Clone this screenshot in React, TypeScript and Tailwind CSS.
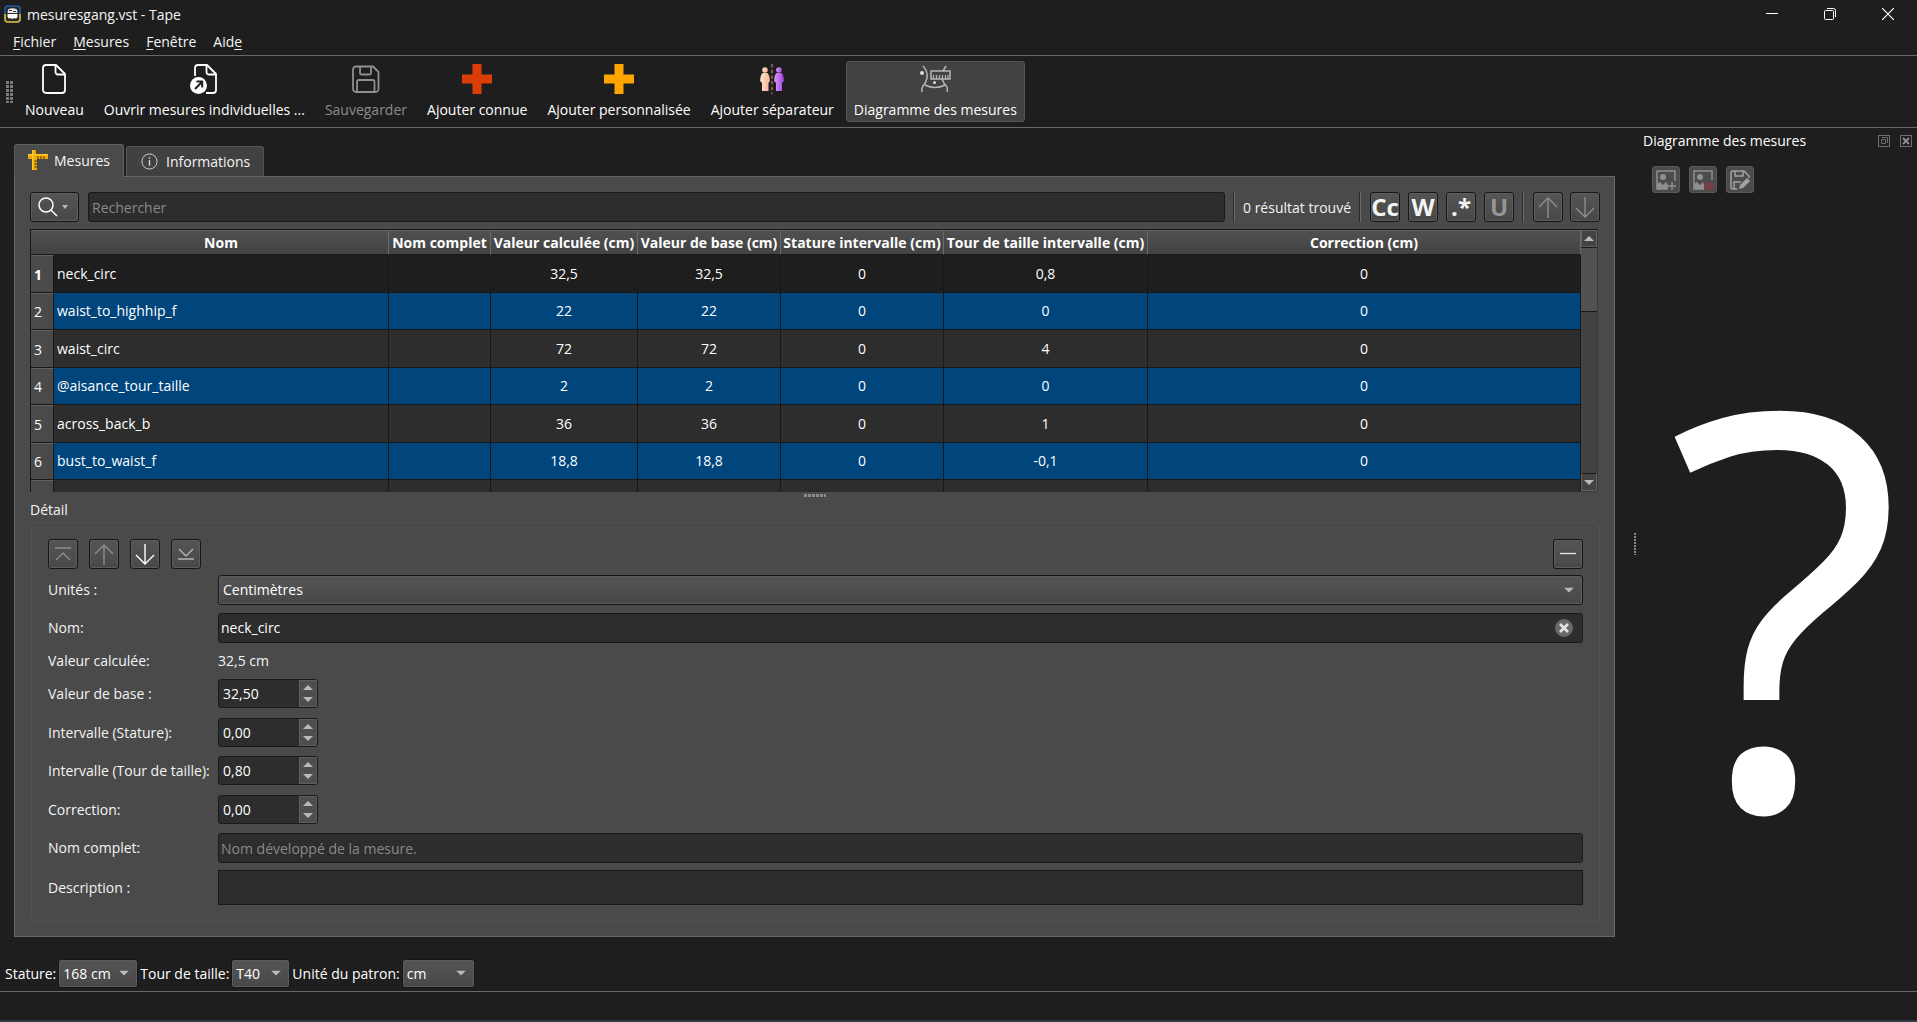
import type { ReactNode } from 'react';

const raised = 'border border-[#161616] rounded-[3px] bg-linear-to-b from-[#555555] to-[#484848] shadow-[inset_0_0_0_1px_#5c5c5c]';
const sunken = 'border border-[#1a1a1a] rounded-[3px] bg-[#2d2d2d] text-white placeholder:text-[#8a8a8a] outline-none';
const dockButton = 'w-7 h-[27px] bg-[#4c4c4c] border border-[#5a5a5a] rounded-[3px] flex items-center justify-center';

interface Row {
  name: string;
  calc: string;
  base: string;
  stature: string;
  waist: string;
  correction: string;
}

const rows: Row[] = [
  { name: 'neck_circ', calc: '32,5', base: '32,5', stature: '0', waist: '0,8', correction: '0' },
  { name: 'waist_to_highhip_f', calc: '22', base: '22', stature: '0', waist: '0', correction: '0' },
  { name: 'waist_circ', calc: '72', base: '72', stature: '0', waist: '4', correction: '0' },
  { name: '@aisance_tour_taille', calc: '2', base: '2', stature: '0', waist: '0', correction: '0' },
  { name: 'across_back_b', calc: '36', base: '36', stature: '0', waist: '1', correction: '0' },
  { name: 'bust_to_waist_f', calc: '18,8', base: '18,8', stature: '0', waist: '-0,1', correction: '0' },
];

const columns = [
  'Nom',
  'Nom complet',
  'Valeur calculée (cm)',
  'Valeur de base (cm)',
  'Stature intervalle (cm)',
  'Tour de taille intervalle (cm)',
  'Correction (cm)',
];

const menus = [
  { before: '', key: 'F', after: 'ichier' },
  { before: '', key: 'M', after: 'esures' },
  { before: '', key: 'F', after: 'enêtre' },
  { before: 'Aid', key: 'e', after: '' },
];

function Caret({ up = false, className = '' }: { up?: boolean; className?: string }) {
  return (
    <svg viewBox="0 0 10 5" className={`w-[10px] h-[5px] ${className}`} aria-hidden="true">
      <path d={up ? 'M0 5L5 0L10 5Z' : 'M0 0L10 0L5 5Z'} fill="#b9b9b9" />
    </svg>
  );
}

function AppIcon() {
  return (
    <svg viewBox="0 0 17 18" className="w-[17px] h-[18px]" aria-hidden="true">
      <rect x="1" y="1" width="15" height="16" rx="3" fill="#26282c" stroke="#1d5ca8" strokeWidth="1.6" />
      <path d="M1 9V14a3 3 0 0 0 3 3H13a3 3 0 0 0 3-3V9" fill="none" stroke="#e3b92c" strokeWidth="1.6" />
      <path d="M4 4.500Q8.500 2 13 4.500L13.500 8H3.500Z" fill="#e9e9e9" />
      <path d="M5 5.500H8M9 6.500H12" stroke="#333" />
      <path d="M3.500 9H13.500V12Q12 14.500 10.500 13L8.500 14L6.500 13Q5 14.500 3.500 12Z" fill="#fff" />
    </svg>
  );
}

function NewIcon() {
  return (
    <svg viewBox="0 0 24 30" className="w-[24px] h-[30px]" fill="none" stroke="#fff" strokeWidth="1.8" strokeLinejoin="round" aria-hidden="true">
      <path d="M4 1H14L23 10V26a3 3 0 0 1-3 3H4a3 3 0 0 1-3-3V4a3 3 0 0 1 3-3Z" />
      <path d="M13.500 1.500V8a2.500 2.500 0 0 0 2.500 2.500H23" />
    </svg>
  );
}

function OpenIcon() {
  return (
    <svg viewBox="0 0 28 30" className="w-[28px] h-[30px]" fill="none" stroke="#fff" strokeWidth="1.8" strokeLinejoin="round" aria-hidden="true">
      <path d="M5 12V4a3 3 0 0 1 3-3H17L26 10V26a3 3 0 0 1-3 3H16" />
      <path d="M16.500 1.500V8a2.500 2.500 0 0 0 2.500 2.500H26" />
      <circle cx="8.500" cy="21.500" r="8.500" fill="#fff" stroke="none" />
      <path d="M5 25L12 18M6.500 17.500H12.200V23.500" stroke="#1f1f1f" strokeWidth="2" />
    </svg>
  );
}

function SaveIcon() {
  return (
    <svg viewBox="0 0 28 30" className="w-[28px] h-[30px]" fill="none" stroke="#8f8f8f" strokeWidth="1.8" strokeLinejoin="round" aria-hidden="true">
      <path d="M4 2.500H21L26.500 8V25a3 3 0 0 1-3 3H4a3 3 0 0 1-3-3V5.500a3 3 0 0 1 3-3Z" />
      <path d="M8 2.500V9a1.500 1.500 0 0 0 1.500 1.500H17.500A1.500 1.500 0 0 0 19 9V2.500" />
      <path d="M5 28V18a2 2 0 0 1 2-2H20.500a2 2 0 0 1 2 2V28" />
    </svg>
  );
}

function PlusIcon({ color }: { color: string }) {
  return (
    <svg viewBox="0 0 30 30" className="w-[30px] h-[30px]" aria-hidden="true">
      <path d="M10.500 0H19.500V10.500H30V19.500H19.500V30H10.500V19.500H0V10.500H10.500Z" fill={color} />
    </svg>
  );
}

function SeparatorIcon() {
  return (
    <svg viewBox="0 0 30 30" className="w-[30px] h-[30px]" aria-hidden="true">
      <defs>
        <linearGradient id="skin" x1="0" x2="1">
          <stop offset="0" stopColor="#ffe2cc" />
          <stop offset="1" stopColor="#f5b595" />
        </linearGradient>
        <linearGradient id="violet" x1="0" x2="1">
          <stop offset="0" stopColor="#d79bf3" />
          <stop offset="1" stopColor="#a23fe6" />
        </linearGradient>
      </defs>
      <g fill="url(#skin)">
        <circle cx="8" cy="6" r="2.800" />
        <path d="M5.500 9H10.500Q12.700 11 12.900 17L11.500 19V27H5V19L3.100 17Q3.300 11 5.500 9Z" />
      </g>
      <g fill="url(#violet)">
        <circle cx="22" cy="6" r="2.800" />
        <path d="M19.500 9H24.500Q26.700 11 26.900 17L25 19V27H19V19L17.100 17Q17.300 11 19.500 9Z" />
      </g>
      <path d="M15 0V30" stroke="#7d5550" strokeWidth="2.200" strokeDasharray="3.500 2.200" />
    </svg>
  );
}

function DiagramIcon() {
  return (
    <svg viewBox="0 0 32 30" className="w-[32px] h-[30px]" fill="none" stroke="#b5b5b5" strokeWidth="1.500" aria-hidden="true">
      <path d="M4 2Q9 7 8 14Q7 19 4 22Q2 25 3 28M27 2L24 7M23 15Q25 20 28 23L28.500 28M6 21Q16 26 26 21" />
      <rect x="12" y="7" width="19" height="8" />
      <path d="M14.500 11V15M17.500 11V15M20.500 11V15M23.500 11V15M26.500 11V15M29 11V15" strokeWidth="1.200" />
      <circle cx="3" cy="9" r="2" fill="#ddd" stroke="none" />
      <circle cx="15.500" cy="18.500" r="1.500" fill="#ddd" stroke="none" />
    </svg>
  );
}

function RulerIcon() {
  return (
    <svg viewBox="0 0 20 20" className="w-[20px] h-[20px]" aria-hidden="true">
      <path d="M4 0H8V4H20V9H9V20H4V9H0V4H4Z" fill="#eda908" />
      <path d="M0 4H20V5.500H0ZM4 0H5.500V20H4Z" fill="#ffc928" />
      <path d="M10 6V9M13 6V9M16 6V9M6.500 11H9M6.500 14H9M6.500 17H9" stroke="#7a5205" strokeWidth="1.300" />
    </svg>
  );
}

type ArrowKind = 'top' | 'up' | 'down' | 'bottom' | 'minus';

const arrowPaths: Record<ArrowKind, string> = {
  top: 'M4 6H20M5 18L12 11L19 18',
  up: 'M12 3V23M3 12L12 3L21 12',
  down: 'M12 2V22M3 13L12 22L21 13',
  bottom: 'M5 7L12 14L19 7M4 17H20',
  minus: 'M4 11.500H20',
};

function ArrowIcon({ kind, color = '#8e8e8e' }: { kind: ArrowKind; color?: string }) {
  return (
    <svg viewBox="0 0 24 24" className="w-6 h-6" fill="none" stroke={color} strokeWidth="1.400" aria-hidden="true">
      <path d={arrowPaths[kind]} />
    </svg>
  );
}

function SquareButton({ label, children }: { label: string; children: ReactNode }) {
  return (
    <button aria-label={label} className={`${raised} w-[30px] h-[30px] flex items-center justify-center shrink-0`}>
      {children}
    </button>
  );
}

interface ToolButtonProps {
  label: string;
  icon: ReactNode;
  disabled?: boolean;
  active?: boolean;
}

function ToolButton({ label, icon, disabled = false, active = false }: ToolButtonProps) {
  const state = active ? 'bg-[#424242] border-[#555555]' : 'border-transparent';
  return (
    <button
      disabled={disabled}
      className={`h-[61px] px-[7px] border rounded-[3px] flex flex-col items-center whitespace-nowrap ${state} ${disabled ? 'text-[#8c8c8c]' : 'text-white'}`}
    >
      <span className="h-[32px] pt-[2px] flex">{icon}</span>
      <span className="mt-[6px] leading-5">{label}</span>
    </button>
  );
}

function Separator() {
  return <div className="w-[2px] h-[30px] bg-[#2a2a2a] border-r border-[#6a6a6a] shrink-0" />;
}

function Select({ id, value, className }: { id: string; value: string; className: string }) {
  return (
    <div className={`relative ${className}`}>
      <select id={id} defaultValue={value} className={`${raised} appearance-none w-full h-full pl-1 text-white outline-none`}>
        <option>{value}</option>
      </select>
      <Caret className="absolute right-[9px] top-1/2 -translate-y-1/2 pointer-events-none" />
    </div>
  );
}

function Spin({ id, value }: { id: string; value: string }) {
  return (
    <div className={`${sunken} w-[100px] h-[29px] flex overflow-hidden`}>
      <input id={id} defaultValue={value} className="flex-1 min-w-0 pl-1 bg-transparent outline-none" />
      <div className="w-[18px] flex flex-col bg-[#4e4e4e] border border-[#5e5e5e]">
        <button aria-label={`Augmenter ${id}`} className="flex-1 flex items-center justify-center">
          <Caret up />
        </button>
        <button aria-label={`Diminuer ${id}`} className="flex-1 flex items-center justify-center">
          <Caret />
        </button>
      </div>
    </div>
  );
}

function Field({ id, label, className, children }: { id: string; label: string; className: string; children: ReactNode }) {
  return (
    <div className={`flex items-center ${className}`}>
      <label htmlFor={id} className="w-[170px] shrink-0 whitespace-nowrap">
        {label}
      </label>
      {children}
    </div>
  );
}

function TitleBar() {
  return (
    <header className="h-[28px] flex items-center pl-1">
      <AppIcon />
      <span className="ml-[6px] flex-1">mesuresgang.vst - Tape</span>
      <div className="flex h-full">
        <button aria-label="Réduire" className="w-[58px] flex items-center justify-center">
          <svg viewBox="0 0 12 12" className="w-3 h-3" stroke="#fff" aria-hidden="true">
            <path d="M0 5.500H12" />
          </svg>
        </button>
        <button aria-label="Restaurer" className="w-[58px] flex items-center justify-center">
          <svg viewBox="0 0 12 12" className="w-3 h-3" stroke="#fff" fill="none" aria-hidden="true">
            <rect x="0.500" y="2.500" width="9" height="9" rx="1" />
            <path d="M3 0.500H9.500A2 2 0 0 1 11.500 2.500V9" />
          </svg>
        </button>
        <button aria-label="Fermer" className="w-[58px] flex items-center justify-center">
          <svg viewBox="0 0 12 12" className="w-3 h-3" stroke="#fff" strokeWidth="1.200" aria-hidden="true">
            <path d="M0 0L12 12M12 0L0 12" />
          </svg>
        </button>
      </div>
    </header>
  );
}

function Toolbar() {
  return (
    <div className="h-[73px] border-y border-[#686868] flex items-center pl-[6px] text-white">
      <svg viewBox="0 0 8 22" className="w-2 h-[22px] mr-[3px]" aria-hidden="true">
        <path d="M1.500 0V22M5.500 0V22" stroke="#7a7a7a" strokeWidth="3" strokeDasharray="3 1" />
      </svg>
      <div className="flex gap-1">
        <ToolButton label="Nouveau" icon={<NewIcon />} />
        <ToolButton label="Ouvrir mesures individuelles ..." icon={<OpenIcon />} />
        <ToolButton label="Sauvegarder" icon={<SaveIcon />} disabled />
        <ToolButton label="Ajouter connue" icon={<PlusIcon color="#dc3d07" />} />
        <ToolButton label="Ajouter personnalisée" icon={<PlusIcon color="#ffa500" />} />
        <ToolButton label="Ajouter séparateur" icon={<SeparatorIcon />} />
        <ToolButton label="Diagramme des mesures" icon={<DiagramIcon />} active />
      </div>
    </div>
  );
}

function SearchBar() {
  return (
    <div className="flex items-center h-[30px]">
      <button aria-label="Options de recherche" className={`${raised} w-[49px] h-[30px] flex items-center justify-center gap-1 pr-1`}>
        <svg viewBox="0 0 20 20" className="w-5 h-5" fill="none" stroke="#fff" strokeWidth="1.500" aria-hidden="true">
          <circle cx="8" cy="8" r="7" />
          <path d="M13 13L19 19" />
        </svg>
        <svg viewBox="0 0 6 4" className="w-[6px] h-1" aria-hidden="true">
          <path d="M0 0H6L3 4Z" fill="#b9b9b9" />
        </svg>
      </button>
      <input aria-label="Rechercher" placeholder="Rechercher" className={`${sunken} ml-[9px] h-[30px] flex-1 pl-[3px]`} />
      <div className="flex items-center pl-2">
        <Separator />
        <span className="px-2 whitespace-nowrap">0 résultat trouvé</span>
        <Separator />
      </div>
      <div className="flex gap-2 pl-[9px] pr-2 text-[24px] font-bold">
        <SquareButton label="Respecter la casse">Cc</SquareButton>
        <SquareButton label="Mots entiers">W</SquareButton>
        <SquareButton label="Expression régulière">.*</SquareButton>
        <SquareButton label="Unicode">
          <span className="text-[#969696]">U</span>
        </SquareButton>
      </div>
      <Separator />
      <div className="flex gap-[7px] pl-[9px]">
        <SquareButton label="Résultat précédent"><ArrowIcon kind="up" /></SquareButton>
        <SquareButton label="Résultat suivant"><ArrowIcon kind="down" /></SquareButton>
      </div>
    </div>
  );
}

function rowStyle(i: number) {
  if (i === 0) return 'h-[38px] bg-[#1e1e1e]';
  return i % 2 === 1 ? 'h-[37px] bg-[#00457c] [&>td]:pb-[2px]' : 'h-[38px] bg-[#2d2d2d]';
}

function MeasureTable() {
  return (
    <div className="mt-[7px] mr-[2px] h-[263px] flex overflow-hidden border-t border-l border-[#191919]">
      <table className="flex-1 w-full table-fixed border-separate border-spacing-0 text-center">
        <colgroup>
          <col className="w-[23px]" />
          <col className="w-[335px]" />
          <col className="w-[102px]" />
          <col className="w-[147px]" />
          <col className="w-[143px]" />
          <col className="w-[163px]" />
          <col className="w-[204px]" />
          <col />
        </colgroup>
        <thead>
          <tr className="h-[25px] bg-linear-to-b from-[#505050] to-[#424242] text-white">
            <td className="p-0 border-t border-b border-t-[#606060] border-b-[#191919]" />
            {columns.map((title) => (
              <th key={title} scope="col" className="p-0 pt-px border-t border-b border-r border-t-[#606060] border-b-[#191919] border-r-[#6a6a6a] leading-5 whitespace-nowrap">
                {title}
              </th>
            ))}
          </tr>
        </thead>
        <tbody>
          {rows.map((row, i) => (
            <tr key={row.name} className={`${rowStyle(i)} [&>td]:border-b [&>td]:border-r [&>td]:border-[#181818] text-white`}>
              <th scope="row" className={`bg-[#4a4a4a] border-b border-r border-t border-t-[#616161] border-b-[#181818] border-r-[#181818] pr-2 ${i === 0 ? 'font-bold' : 'font-normal'}`}>
                {i + 1}
              </th>
              <td className="text-left pl-[3px]">{row.name}</td>
              <td />
              <td>{row.calc}</td>
              <td>{row.base}</td>
              <td>{row.stature}</td>
              <td>{row.waist}</td>
              <td>{row.correction}</td>
            </tr>
          ))}
          <tr className="h-[37px] bg-[#2d2d2d] [&>td]:border-r [&>td]:border-[#181818]">
            <th className="bg-[#4a4a4a] border-r border-t border-t-[#616161] border-r-[#181818]" />
            {columns.map((title) => <td key={title} />)}
          </tr>
        </tbody>
      </table>
      <div className="w-[17px] h-[262px] shrink-0 flex flex-col bg-[#434343] border-r border-b border-[#383838]">
        <button aria-label="Défiler vers le haut" className="h-[17px] border border-[#616161] flex items-center justify-center">
          <Caret up />
        </button>
        <div className="h-[65px] border-y border-[#191919] bg-[#525252]" />
        <div className="flex-1" />
        <button aria-label="Défiler vers le bas" className="h-[18px] border border-t-[#191919] border-[#616161] flex items-center justify-center">
          <Caret />
        </button>
      </div>
    </div>
  );
}

function SplitterHandle() {
  return (
    <div className="h-2 pt-[2px] flex justify-center">
      <svg viewBox="0 0 22 3" className="w-[22px] h-[3px]" aria-hidden="true">
        <path d="M0 1.500H22" stroke="#8a8a8a" strokeWidth="3" strokeDasharray="3 1" />
      </svg>
    </div>
  );
}

function Detail() {
  return (
    <section className="leading-5">
      <h2 className="h-[22px]">Détail</h2>
      <div className="ml-px border border-[#525252] rounded-sm px-4 pt-4 pb-4">
        <div className="flex gap-[11px]">
          <SquareButton label="Déplacer en haut"><ArrowIcon kind="top" /></SquareButton>
          <SquareButton label="Monter"><ArrowIcon kind="up" /></SquareButton>
          <SquareButton label="Descendre"><ArrowIcon kind="down" color="#fff" /></SquareButton>
          <SquareButton label="Déplacer en bas"><ArrowIcon kind="bottom" color="#b5b5b5" /></SquareButton>
          <div className="flex-1" />
          <SquareButton label="Supprimer"><ArrowIcon kind="minus" color="#ddd" /></SquareButton>
        </div>
        <Field id="unites" label="Unités :" className="mt-[6px]">
          <Select id="unites" value="Centimètres" className="flex-1 h-[30px]" />
        </Field>
        <Field id="nom" label="Nom:" className="mt-2">
          <div className={`${sunken} flex-1 h-[30px] flex items-center pr-[9px]`}>
            <input id="nom" defaultValue="neck_circ" className="flex-1 pl-[2px] bg-transparent outline-none" />
            <button aria-label="Effacer">
              <svg viewBox="0 0 18 18" className="w-[18px] h-[18px]" aria-hidden="true">
                <circle cx="9" cy="9" r="9" fill="#6a6a6a" />
                <path d="M5 5L13 13M13 5L5 13" stroke="#e4e4e4" strokeWidth="2.500" />
              </svg>
            </button>
          </div>
        </Field>
        <Field id="calculee" label="Valeur calculée:" className="mt-2">
          <output id="calculee">32,5 cm</output>
        </Field>
        <Field id="base" label="Valeur de base :" className="mt-2"><Spin id="base" value="32,50" /></Field>
        <Field id="stature-int" label="Intervalle (Stature):" className="mt-[10px]"><Spin id="stature-int" value="0,00" /></Field>
        <Field id="taille-int" label="Intervalle (Tour de taille):" className="mt-[9px]"><Spin id="taille-int" value="0,80" /></Field>
        <Field id="correction" label="Correction:" className="mt-[10px]"><Spin id="correction" value="0,00" /></Field>
        <Field id="nom-complet" label="Nom complet:" className="mt-[9px]">
          <input id="nom-complet" placeholder="Nom développé de la mesure." className={`${sunken} flex-1 h-[30px] pl-[2px]`} />
        </Field>
        <Field id="description" label="Description :" className="mt-[7px]">
          <textarea id="description" className="flex-1 h-[35px] resize-none border border-[#191919] bg-[#2d2d2d] outline-none" />
        </Field>
      </div>
    </section>
  );
}

function Dock() {
  return (
    <aside className="w-[276px] shrink-0 flex flex-col text-white">
      <div className="h-[25px] flex items-center pl-[2px] pr-[5px]">
        <h2 className="flex-1">Diagramme des mesures</h2>
        <div className="flex gap-[10px]">
          <button aria-label="Détacher">
            <svg viewBox="0 0 12 12" className="w-3 h-3" fill="none" stroke="#6e6e6e" aria-hidden="true">
              <rect x="0.500" y="0.500" width="11" height="11" />
              <path d="M3.500 4.500H7.500V8.500H3.500ZM4 2.500H9.500V8" />
            </svg>
          </button>
          <button aria-label="Fermer le panneau">
            <svg viewBox="0 0 12 12" className="w-3 h-3" fill="none" stroke="#6e6e6e" aria-hidden="true">
              <rect x="0.500" y="0.500" width="11" height="11" />
              <path d="M3 3L9 9M9 3L3 9" strokeWidth="1.800" stroke="#909090" />
            </svg>
          </button>
        </div>
      </div>
      <div className="flex gap-[9px] mt-[13px] pl-[11px]">
        <button aria-label="Ajouter une image" className={dockButton}>
          <svg viewBox="0 0 22 22" className="w-[22px] h-[22px]" fill="none" stroke="#8f8f8f" strokeWidth="1.500" aria-hidden="true">
            <path d="M13 20H2V2H20V12" />
            <circle cx="8" cy="8" r="3" fill="#8f8f8f" stroke="none" />
            <path d="M2 20V15L5 13L8 16L11 13L13 16V20Z" fill="#8f8f8f" stroke="none" />
            <path d="M17 13V21M13 17H21" />
          </svg>
        </button>
        <button aria-label="Retirer l'image" className={dockButton}>
          <svg viewBox="0 0 22 22" className="w-[22px] h-[22px]" fill="none" stroke="#8f8f8f" strokeWidth="1.500" aria-hidden="true">
            <path d="M12 20H2V2H20V11" />
            <circle cx="8" cy="8" r="3" fill="#8f8f8f" stroke="none" />
            <path d="M2 20V15L5 13L8 16L11 13L12 16V20Z" fill="#8f8f8f" stroke="none" />
            <circle cx="17" cy="17" r="3.500" stroke="#8a3a3f" />
            <path d="M14.500 14.500L19.500 19.500M19.500 14.500L14.500 19.500" stroke="#8a3a3f" strokeWidth="1.200" />
          </svg>
        </button>
        <button aria-label="Enregistrer l'image" className={dockButton}>
          <svg viewBox="0 0 22 22" className="w-[22px] h-[22px]" fill="none" stroke="#a2a2a2" strokeWidth="1.500" aria-hidden="true">
            <path d="M8 20H4a2 2 0 0 1-2-2V4a2 2 0 0 1 2-2H15L20 7V9M6 2V7H14V2M5 20V13H12" />
            <path d="M10 20L11 16L18 9L21 12L14 19Z" fill="#a2a2a2" stroke="none" />
          </svg>
        </button>
      </div>
      <div className="flex-1 flex items-center justify-center overflow-hidden pt-10 pl-3">
        <span className="text-[550px] leading-none">?</span>
      </div>
    </aside>
  );
}

export default function App() {
  return (
    <div className="min-h-screen flex flex-col bg-[#1e1e1e] text-[#f4f4f4] text-[14px] font-['Open_Sans','Noto_Sans',sans-serif]">
      <TitleBar />
      <nav className="h-[27px] flex items-center gap-[17px] pl-[13px]">
        {menus.map((m) => (
          <button key={m.before + m.key + m.after}>
            {m.before}
            <span className="underline underline-offset-2">{m.key}</span>
            {m.after}
          </button>
        ))}
      </nav>
      <Toolbar />
      <main className="flex-1 flex">
        <div className="flex-1 min-w-0 flex flex-col pl-[14px] pt-4">
          <div role="tablist" className="flex items-end gap-[2px] h-8">
            <button role="tab" aria-selected="true" className="h-[33px] -mb-px z-10 w-[110px] flex items-center gap-[6px] pl-[13px] pb-[2px] bg-[#4a4a4a] border border-b-0 border-[#5e5e5e] rounded-t-[3px]">
              <RulerIcon />
              Mesures
            </button>
            <button role="tab" aria-selected="false" className="h-[30px] w-[138px] flex items-center gap-2 pl-[14px] bg-[#414141] border border-b-0 border-[#545454] rounded-t-[3px]">
              <svg viewBox="0 0 18 18" className="w-[17px] h-[17px]" fill="none" stroke="#d8d8d8" aria-hidden="true">
                <circle cx="9" cy="9" r="8" />
                <path d="M9 7.500V13.500M9 4.500V6" strokeWidth="1.400" />
              </svg>
              Informations
            </button>
          </div>
          <div className="border border-[#666666] bg-[#4a4a4a] pl-[15px] pr-[14px] pt-[15px] pb-[14px]">
            <SearchBar />
            <MeasureTable />
            <SplitterHandle />
            <Detail />
          </div>
        </div>
        <div className="w-[26px] shrink-0 flex justify-end pr-[5px] pt-[405px]">
          <svg viewBox="0 0 2 22" className="w-[2px] h-[22px]" aria-hidden="true">
            <path d="M1 0V22" stroke="#8a8a8a" strokeWidth="2" strokeDasharray="2 1" />
          </svg>
        </div>
        <Dock />
      </main>
      <div className="h-[33px] flex items-center gap-[2px] pl-[5px] pb-1 border-b border-[#686868] text-white">
        <label htmlFor="stature">Stature:</label>
        <Select id="stature" value="168 cm" className="w-[80px] h-[29px]" />
        <label htmlFor="taille">Tour de taille:</label>
        <Select id="taille" value="T40" className="w-[59px] h-[29px]" />
        <label htmlFor="patron">Unité du patron:</label>
        <Select id="patron" value="cm" className="w-[73px] h-[29px]" />
      </div>
      <footer className="h-[30px] border-b-2 border-[#353a42]" />
    </div>
  );
}
